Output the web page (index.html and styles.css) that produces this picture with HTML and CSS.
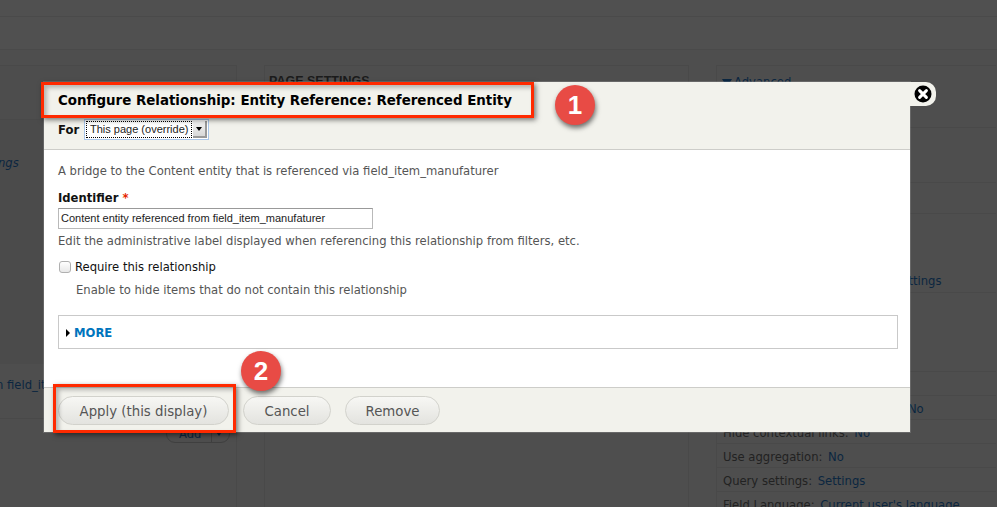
FILE: index.html
```html
<!DOCTYPE html>
<html lang="en">
<head>
<meta charset="utf-8">
<title>Configure Relationship</title>
<link rel="stylesheet" href="styles.css">
</head>
<body>
<div class="page">
  <div class="band band-one"></div>
  <div class="band band-two"></div>
  <div class="columns">
    <section class="col col-left">
      <div class="left-head"></div>
      <div class="left-link"><a>ngs</a></div>
      <div class="left-rel"><a>n field_it</a></div>
      <div class="left-add"><span class="add-btn"><span class="add-text">Add</span><i class="add-split"></i><i class="add-arrow"></i></span></div>
    </section>
    <section class="col col-mid">
      <h3 class="mid-title">PAGE SETTINGS</h3>
    </section>
    <section class="col col-right">
      <div class="adv-head"><span class="adv-arrow"></span><a>Advanced</a></div>
      <div class="r-blank r1"></div>
      <div class="r-blank r2"></div>
      <div class="r-row r3"><span>Exposed form style:</span> <a>Basic</a> | <a>Settings</a></div>
      <div class="r-blank r4"></div>
      <div class="r-blank r4b"></div>
      <div class="r-row"><span>Hide attachments in summary:</span> <a>No</a></div>
      <div class="r-row"><span>Hide contextual links:</span> <a>No</a></div>
      <div class="r-row"><span>Use aggregation:</span> <a>No</a></div>
      <div class="r-row"><span>Query settings:</span> <a>Settings</a></div>
      <div class="r-row"><span>Field Language:</span> <a>Current user's language</a></div>
    </section>
  </div>
</div>

<div class="modal">
  <header class="modal-head">
    <h1 class="modal-title">Configure Relationship: Entity Reference: Referenced Entity</h1>
    <div class="for-row">
      <label class="for-label">For</label>
      <span class="select"><span class="select-text">This page (override)</span><span class="select-arrow"></span></span>
    </div>
  </header>
  <div class="modal-body">
    <p class="desc">A bridge to the Content entity that is referenced via field_item_manufaturer</p>
    <label class="field-label">Identifier <em>*</em></label>
    <div class="text-input">Content entity referenced from field_item_manufaturer</div>
    <p class="desc help">Edit the administrative label displayed when referencing this relationship from filters, etc.</p>
    <div class="check-row"><span class="checkbox"></span><span>Require this relationship</span></div>
    <p class="desc check-help">Enable to hide items that do not contain this relationship</p>
    <div class="more"><span class="more-arrow"></span><a>MORE</a></div>
  </div>
  <footer class="modal-foot">
    <span class="btn btn-apply">Apply (this display)</span>
    <span class="btn btn-cancel">Cancel</span>
    <span class="btn btn-remove">Remove</span>
  </footer>
  <div class="close-tab">
    <svg class="close-icon" viewBox="0 0 18 18" width="18" height="18" aria-hidden="true">
      <circle cx="9" cy="9" r="8.5" fill="#000"/>
      <path d="M5.6 5.6 12.4 12.4M12.4 5.6 5.6 12.4" stroke="#fff" stroke-width="3" stroke-linecap="round"/>
    </svg>
  </div>
</div>

<div class="callout callout-title"></div>
<div class="callout callout-apply"></div>
<div class="badge badge-one">1</div>
<div class="badge badge-two">2</div>
</body>
</html>
```
FILE: styles.css
```css
* { box-sizing: border-box; }
html, body { margin: 0; padding: 0; }
body {
  width: 997px;
  height: 507px;
  overflow: hidden;
  position: relative;
  background: #4e4e4e;
  font-family: "DejaVu Sans", sans-serif;
  font-size: 11.6px;
  color: #222;
}
a { color: #0b2640; }

/* dimmed page behind the dialog */
.page { height: 507px; overflow: hidden; }
.band { border-bottom: 1px solid #4a4a4a; }
.band-one { height: 17px; background: #505050; }
.band-two { height: 33px; background: #505050; }
.columns {
  display: grid;
  grid-template-columns: 237px 425px 280px;
  column-gap: 27px;
  margin-top: 15px;
}
.col { border: 1px solid #494949; border-bottom: 0; height: 442px; }
.col-left { border-left: 0; }
.left-head { height: 54px; border-bottom: 1px solid #494949; background: #4d4d4d; }
.left-link {
  height: 244px;
  padding-top: 36px;
  margin-left: -2px;
  font-style: italic;
  white-space: nowrap;
  background: #4b4b4b;
}
.left-rel {
  height: 54px;
  padding-top: 14px;
  margin-left: -4px;
  white-space: nowrap;
}
.left-add {
  padding-top: 6px;
  padding-right: 6px;
  display: flex;
  justify-content: flex-end;
  border-top: 1px solid #494949;
}
.add-btn {
  display: flex;
  align-items: center;
  width: 64px;
  height: 18px;
  padding-left: 12px;
  border: 1px solid #3f3f3f;
  border-radius: 9px;
  color: #0b2640;
}
.add-text { width: 32px; }
.add-split { width: 1px; height: 16px; margin-right: 4px; background: #3f3f3f; }
.add-arrow {
  border-left: 3px solid transparent;
  border-right: 3px solid transparent;
  border-top: 4px solid #0b2640;
}
.mid-title {
  margin: 8px 0 0 4px;
  font-family: "Liberation Sans", sans-serif;
  font-size: 12.5px;
  font-weight: 700;
  color: #1b1b1b;
}
.col-right { border-right: 0; padding-top: 9px; }
.adv-head {
  display: flex;
  align-items: flex-start;
  gap: 2px;
  height: 53px;
  padding-left: 5px;
  border-bottom: 1px solid #494949;
}
.adv-arrow {
  width: 0;
  height: 0;
  margin-top: 4px;
  border-left: 5px solid transparent;
  border-right: 5px solid transparent;
  border-top: 8px solid #0b2640;
}
.r-blank { border-bottom: 1px solid #494949; }
.r1 { height: 55px; }
.r2 { height: 31px; }
.r4 { height: 79px; }
.r4b { height: 24px; }
.r-row {
  height: 24px;
  padding-left: 6px;
  line-height: 26px;
  white-space: nowrap;
  color: #222;
  border-bottom: 1px solid #494949;
}
.r-row a { margin-left: 2px; }
.r-row.r3 { height: 79px; padding-top: 60px; line-height: 14px; }
.r-row.r3 a { margin-left: 5px; }

/* dialog */
.modal {
  position: absolute;
  left: 44px;
  top: 82px;
  width: 866px;
  height: 350px;
  display: flex;
  flex-direction: column;
  background: #fff;
  box-shadow: 0 0 0 1px rgba(255,255,255,.15);
}
.modal-head {
  height: 68px;
  padding: 10px 14px 0;
  background: #f2f2ec;
  border-bottom: 1px solid #cdcdc9;
}
.modal-title {
  margin: 0;
  font-size: 13.4px;
  line-height: 17px;
  font-weight: 700;
  color: #000;
  white-space: nowrap;
}
.for-row { display: flex; align-items: center; margin-top: 10px; }
.for-label { width: 26px; font-weight: 700; font-size: 11.6px; color: #111; }
.select {
  display: flex;
  align-items: stretch;
  width: 125px;
  height: 21px;
  padding: 1px;
  background: #fff;
  border: 1px solid #a9c6ea;
}
.select-text {
  flex: 1;
  font-family: "Liberation Sans", sans-serif;
  font-size: 11px;
  line-height: 15px;
  padding-left: 3px;
  margin: 1px 0 1px 1px;
  outline: 1px dotted #000;
  color: #222;
  white-space: nowrap;
}
.select-arrow {
  position: relative;
  width: 14px;
  margin-left: 2px;
  background: linear-gradient(#f4f4f4, #d8d8d8);
  border-right: 2px solid #9a9a9a;
  border-bottom: 2px solid #9a9a9a;
}
.select-arrow::after {
  content: "";
  position: absolute;
  left: 3px;
  top: 6px;
  border-left: 3px solid transparent;
  border-right: 3px solid transparent;
  border-top: 4px solid #000;
}
.modal-body { flex: 1; padding: 14px 12px 0 14px; }
.desc { margin: 0; font-size: 11.6px; line-height: 15px; color: #555; white-space: nowrap; }
.field-label { display: block; margin-top: 12px; font-weight: 700; font-size: 11.6px; line-height: 15px; color: #111; }
.field-label em { color: #e62600; font-style: normal; }
.text-input {
  width: 315px;
  height: 21px;
  margin-top: 2px;
  padding-left: 2px;
  font-family: "Liberation Sans", sans-serif;
  font-size: 11px;
  line-height: 19px;
  color: #222;
  border: 1px solid #b9b9b9;
  border-top-color: #999;
}
.help { margin-top: 5px; }
.check-row { display: flex; align-items: center; gap: 4px; margin-top: 10px; margin-left: 1px; line-height: 16px; color: #111; }
.checkbox {
  width: 12px;
  height: 12px;
  border: 1px solid #b0b0b0;
  border-radius: 3px;
  background: linear-gradient(#fff, #e8e8e8);
}
.check-help { margin-top: 8px; margin-left: 18px; }
.more {
  display: flex;
  align-items: center;
  gap: 4px;
  height: 34px;
  margin-top: 17px;
  padding: 1px 0 0 7px;
  border: 1px solid #c9c9c9;
}
.more-arrow {
  border-top: 4px solid transparent;
  border-bottom: 4px solid transparent;
  border-left: 4px solid #000;
}
.more a { color: #0074bd; font-weight: 700; font-size: 11.6px; }
.modal-foot {
  height: 45px;
  display: flex;
  gap: 14px;
  padding: 8px 14px 0;
  background: #f2f2ec;
  border-top: 1px solid #cdcdc9;
}
.btn {
  height: 29px;
  padding-top: 1px;
  display: flex;
  align-items: center;
  justify-content: center;
  font-size: 13.3px;
  color: #555;
  white-space: nowrap;
  border: 1px solid #d2d2cc;
  border-radius: 15px;
  background: linear-gradient(#f7f7f4, #e3e3df);
}
.btn-apply { width: 171px; }
.btn-cancel { width: 88px; }
.btn-remove { width: 95px; }
.close-tab {
  position: absolute;
  right: -26px;
  top: 0;
  width: 26px;
  height: 24px;
  display: flex;
  align-items: center;
  justify-content: flex-end;
  padding-right: 4px;
  background: #f2f2ec;
  border-radius: 0 10px 10px 0;
}
.close-icon { display: block; }

/* annotations */
.callout {
  position: absolute;
  border: 3px solid #ff2a00;
  box-shadow: 2px 2px 5px rgba(0,0,0,.5), inset 3px 3px 4px rgba(0,0,0,.25);
}
.callout-title { left: 41px; top: 82px; width: 493px; height: 36px; }
.callout-apply { left: 53px; top: 384px; width: 183px; height: 49px; }
.badge {
  position: absolute;
  width: 40px;
  height: 40px;
  border-radius: 50%;
  display: flex;
  align-items: center;
  justify-content: center;
  background: #e84b45;
  color: #fff;
  font-family: "Liberation Sans", sans-serif;
  font-weight: 700;
  font-size: 26px;
  box-shadow: 1px 3px 5px rgba(0,0,0,.55);
}
.badge-one { left: 555px; top: 85px; }
.badge-two { left: 241px; top: 351px; }
```
